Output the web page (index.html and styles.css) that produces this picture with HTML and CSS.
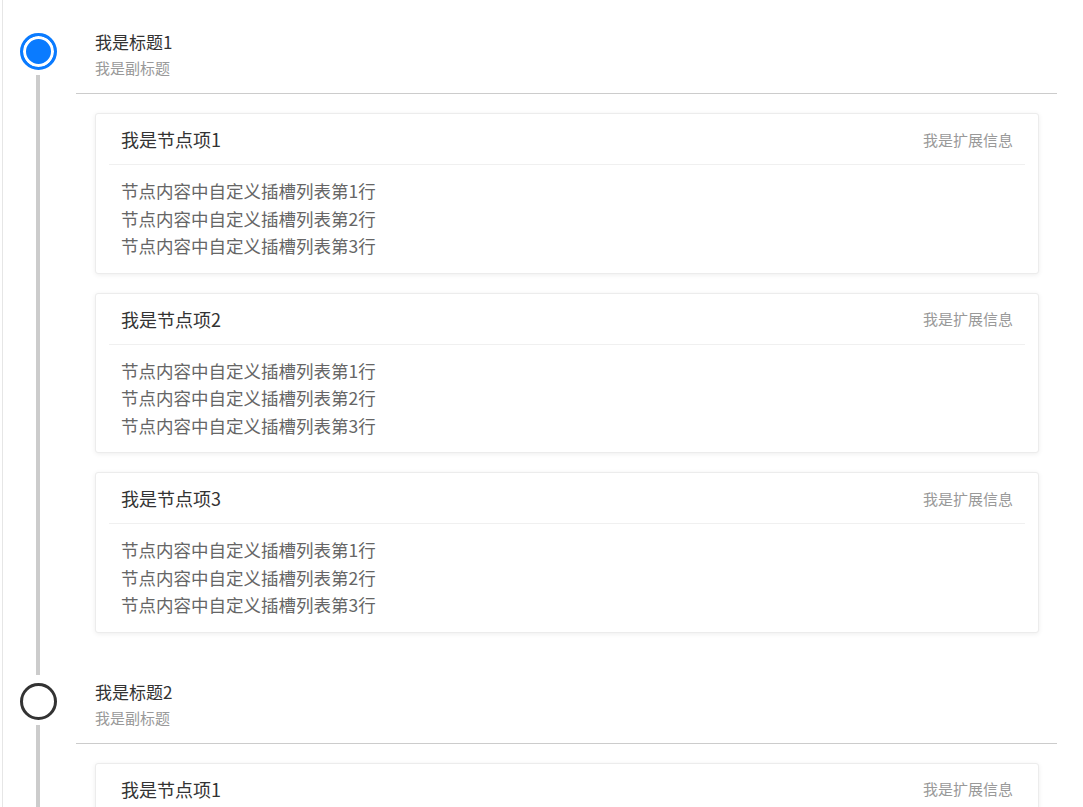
FILE: index.html
```html
<!DOCTYPE html>
<html lang="zh-CN">
<head>
  <meta charset="UTF-8">
  <title>时间轴</title>
  <link rel="stylesheet" href="styles.css">
</head>
<body>
  <div class="timeline">
    <!-- 第一组：当前节点 -->
    <section class="group">
      <div class="axis">
        <span class="dot dot-active"></span>
        <span class="rail"></span>
      </div>
      <div class="content">
        <div class="head">
          <div class="head-title">我是标题1</div>
          <div class="head-sub">我是副标题</div>
        </div>

        <div class="card">
          <div class="card-head">
            <span class="card-title">我是节点项1</span>
            <span class="card-extra">我是扩展信息</span>
          </div>
          <div class="card-body">
            <div>节点内容中自定义插槽列表第1行</div>
            <div>节点内容中自定义插槽列表第2行</div>
            <div>节点内容中自定义插槽列表第3行</div>
          </div>
        </div>

        <div class="card">
          <div class="card-head">
            <span class="card-title">我是节点项2</span>
            <span class="card-extra">我是扩展信息</span>
          </div>
          <div class="card-body">
            <div>节点内容中自定义插槽列表第1行</div>
            <div>节点内容中自定义插槽列表第2行</div>
            <div>节点内容中自定义插槽列表第3行</div>
          </div>
        </div>

        <div class="card">
          <div class="card-head">
            <span class="card-title">我是节点项3</span>
            <span class="card-extra">我是扩展信息</span>
          </div>
          <div class="card-body">
            <div>节点内容中自定义插槽列表第1行</div>
            <div>节点内容中自定义插槽列表第2行</div>
            <div>节点内容中自定义插槽列表第3行</div>
          </div>
        </div>
      </div>
    </section>

    <!-- 第二组（下方内容超出可视区域） -->
    <section class="group">
      <div class="axis">
        <span class="dot"></span>
        <span class="rail"></span>
      </div>
      <div class="content">
        <div class="head">
          <div class="head-title">我是标题2</div>
          <div class="head-sub">我是副标题</div>
        </div>

        <div class="card">
          <div class="card-head">
            <span class="card-title">我是节点项1</span>
            <span class="card-extra">我是扩展信息</span>
          </div>
        </div>
      </div>
    </section>
  </div>
</body>
</html>
```

FILE: styles.css
```css
html, body {
  margin: 0;
  height: 100%;
  overflow: hidden;
  background: #fff;
}
body {
  font-family: "Noto Sans CJK SC", "Noto Sans", sans-serif;
}
.timeline {
  margin-left: 2px;
  border-left: 1px solid #e6e6e6;
  padding-top: 25px;
  min-height: 100%;
  box-sizing: border-box;
}
.group {
  display: flex;
}
.axis {
  flex: none;
  width: 73px;
  padding-right: 3px;
  box-sizing: border-box;
  display: flex;
  flex-direction: column;
  align-items: center;
}
.dot {
  flex: none;
  width: 37px;
  height: 37px;
  margin-top: 8px;
  border: 3px solid #333;
  border-radius: 50%;
  background: #fff;
  box-sizing: border-box;
}
.dot-active {
  border-color: #0a7bff;
  background: #0a7bff;
  box-shadow: inset 0 0 0 3px #fff;
}
.rail {
  flex: 1;
  width: 4px;
  margin-top: 5px;
  background: #ccc;
}
.content {
  flex: 1;
  margin-right: 26px;
  padding-bottom: 42px;
}
.head {
  padding: 6px 0 15px 19px;
  border-bottom: 1px solid #ccc;
}
.head-title {
  font-size: 17px;
  line-height: 22px;
  color: #333;
}
.head-sub {
  margin-top: 5px;
  font-size: 15px;
  line-height: 20px;
  color: #999;
}
.card {
  margin: 19px 18px 0 19px;
  background: #fff;
  border: 1px solid #ececec;
  border-radius: 3px;
  box-shadow: 0 1px 5px rgba(0,0,0,0.07);
}
.card-head {
  display: flex;
  align-items: center;
  justify-content: space-between;
  height: 50px;
  margin: 0 13px;
  padding: 0 12px;
  border-bottom: 1px solid #f0f0f0;
}
.card-title {
  font-size: 18px;
  color: #333;
}
.card-extra {
  font-size: 15px;
  color: #999;
}
.card-body {
  padding: 12px 25px 13px;
  font-size: 17.5px;
  line-height: 27.5px;
  color: #666;
}
```
